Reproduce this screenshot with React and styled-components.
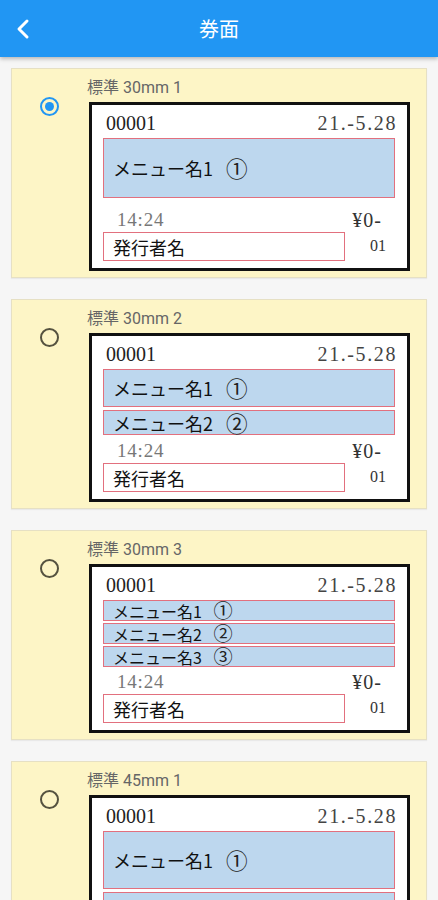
import React from "react";
import styled, { createGlobalStyle } from "styled-components";

const GlobalStyle = createGlobalStyle`
  body {
    margin: 0;
    background: #f6f6f6;
    font-family: Roboto, "Noto Sans CJK JP", sans-serif;
  }
`;

const Page = styled.div`
  min-height: 900px;
  background: #f6f6f6;
`;

const Header = styled.header`
  height: 57px;
  background: #2196f3;
  display: flex;
  align-items: center;
  justify-content: center;
  position: relative;
  box-shadow: 0 2px 4px rgba(0, 0, 0, 0.25);
`;

const Back = styled.div`
  position: absolute;
  left: 14px;
  top: 18px;
  width: 18px;
  height: 22px;
`;

const Title = styled.h1`
  margin: 0;
  color: #fff;
  font-size: 20px;
  font-weight: 400;
  font-family: "Noto Sans CJK JP", sans-serif;
`;

const List = styled.div`
  padding: 11px 11px 0;
  display: flex;
  flex-direction: column;
  gap: 21px;
`;

const Card = styled.div`
  display: grid;
  grid-template-columns: 75px 1fr;
  background: #fdf5c6;
  border: 1px solid #e6e0c4;
  padding: 0 18px 6px 0;
  box-shadow: 0 1px 1px rgba(0, 0, 0, 0.05);
`;

const RadioCol = styled.div`
  display: flex;
  justify-content: center;
  padding-top: 28px;
`;

const Radio = styled.div`
  box-sizing: border-box;
  width: 19px;
  height: 19px;
  border-radius: 50%;
  border: 2px solid ${(p) => (p.checked ? "#2196f3" : "#55523f")};
  display: flex;
  align-items: center;
  justify-content: center;

  &::after {
    content: "";
    display: ${(p) => (p.checked ? "block" : "none")};
    width: 9px;
    height: 9px;
    border-radius: 50%;
    background: #2196f3;
  }
`;

const Content = styled.div`
  display: flex;
  flex-direction: column;
`;

const Label = styled.div`
  padding-top: 9px;
  height: 33px;
  box-sizing: border-box;
  font-size: 16px;
  line-height: 20px;
  color: #666;
  font-family: Roboto, "Noto Sans CJK JP", sans-serif;
`;

const Ticket = styled.div`
  margin-left: 2px;
  box-sizing: border-box;
  width: 321px;
  height: ${(p) => p.h}px;
  background: #fff;
  border: 3px solid #111;
  padding: 0 12px 7px 11px;
  display: flex;
  flex-direction: column;
`;

const TopRow = styled.div`
  display: flex;
  justify-content: space-between;
  align-items: center;
  height: 33px;
  padding: 4px 0 0 3px;
  box-sizing: border-box;
  font-family: "Liberation Serif", serif;
  font-size: 20px;
  color: #222;
`;

const DateText = styled.span`
  color: #444;
  letter-spacing: 1.6px;
  margin-right: -2px;
`;

const Menus = styled.div`
  display: flex;
  flex-direction: column;
  gap: ${(p) => p.gap}px;
`;

const MenuBox = styled.div`
  box-sizing: border-box;
  height: ${(p) => p.h}px;
  background: #bdd7ee;
  border: 1px solid #e2707e;
  display: flex;
  align-items: center;
  padding-left: 9px;
  font-family: "Noto Sans CJK JP", sans-serif;
  font-size: ${(p) => p.fs}px;
  line-height: 1;
  color: #111;
  white-space: nowrap;
`;

const Circled = styled.span`
  font-size: 1.2em;
  line-height: 1;
  margin-left: 0.6em;
  color: #222;
`;

const Footer = styled.div`
  margin-top: auto;
  display: grid;
  grid-template-columns: 242px 1fr;
`;

const FooterLeft = styled.div`
  display: flex;
  flex-direction: column;
`;

const Time = styled.div`
  font-family: "Liberation Serif", serif;
  font-size: 19px;
  letter-spacing: 0.8px;
  line-height: 22px;
  color: #777;
  padding-left: 14px;
  margin-bottom: 1px;
`;

const Issuer = styled.div`
  box-sizing: border-box;
  height: 29px;
  border: 1px solid #e2707e;
  display: flex;
  align-items: center;
  padding-left: 9px;
  font-family: "Noto Sans CJK JP", sans-serif;
  font-size: 18px;
  color: #111;
`;

const FooterRight = styled.div`
  display: flex;
  flex-direction: column;
  align-items: flex-end;
  font-family: "Liberation Serif", serif;
  color: #333;
`;

const Price = styled.div`
  font-size: 20px;
  line-height: 22px;
  letter-spacing: 1px;
  margin-right: 13px;
`;

const Serial = styled.div`
  font-size: 16px;
  line-height: 18px;
  margin-top: 6px;
  margin-right: 9px;
`;

const tickets = [
  {
    label: "標準 30mm 1",
    checked: true,
    h: 169,
    gap: 3,
    menus: [{ name: "メニュー名1", no: "①", h: 60, fs: 18 }],
  },
  {
    label: "標準 30mm 2",
    h: 169,
    gap: 3,
    menus: [
      { name: "メニュー名1", no: "①", h: 38, fs: 18 },
      { name: "メニュー名2", no: "②", h: 25, fs: 18 },
    ],
  },
  {
    label: "標準 30mm 3",
    h: 169,
    gap: 2,
    menus: [
      { name: "メニュー名1", no: "①", h: 21, fs: 16 },
      { name: "メニュー名2", no: "②", h: 21, fs: 16 },
      { name: "メニュー名3", no: "③", h: 21, fs: 16 },
    ],
  },
  {
    label: "標準 45mm 1",
    h: 250,
    gap: 3,
    menus: [
      { name: "メニュー名1", no: "①", h: 58, fs: 18 },
      { name: "メニュー名2", no: "②", h: 58, fs: 18 },
    ],
  },
];

const BackIcon = () => (
  <Back>
    <svg width="18" height="22" viewBox="0 0 18 22">
      <path
        d="M13 3 L5 11 L13 19"
        fill="none"
        stroke="#fff"
        strokeWidth="3"
        strokeLinecap="round"
        strokeLinejoin="round"
      />
    </svg>
  </Back>
);

const TicketCard = ({ t }) => (
  <Card>
    <RadioCol>
      <Radio checked={t.checked} />
    </RadioCol>
    <Content>
      <Label>{t.label}</Label>
      <Ticket h={t.h}>
        <TopRow>
          <span>00001</span>
          <DateText>21.-5.28</DateText>
        </TopRow>
        <Menus gap={t.gap}>
          {t.menus.map((m, i) => (
            <MenuBox key={i} h={m.h} fs={m.fs}>
              {m.name}
              <Circled>{m.no}</Circled>
            </MenuBox>
          ))}
        </Menus>
        <Footer>
          <FooterLeft>
            <Time>14:24</Time>
            <Issuer>発行者名</Issuer>
          </FooterLeft>
          <FooterRight>
            <Price>¥0-</Price>
            <Serial>01</Serial>
          </FooterRight>
        </Footer>
      </Ticket>
    </Content>
  </Card>
);

export default function App() {
  return (
    <Page>
      <GlobalStyle />
      <Header>
        <BackIcon />
        <Title>券面</Title>
      </Header>
      <List>
        {tickets.map((t) => (
          <TicketCard key={t.label} t={t} />
        ))}
      </List>
    </Page>
  );
}
